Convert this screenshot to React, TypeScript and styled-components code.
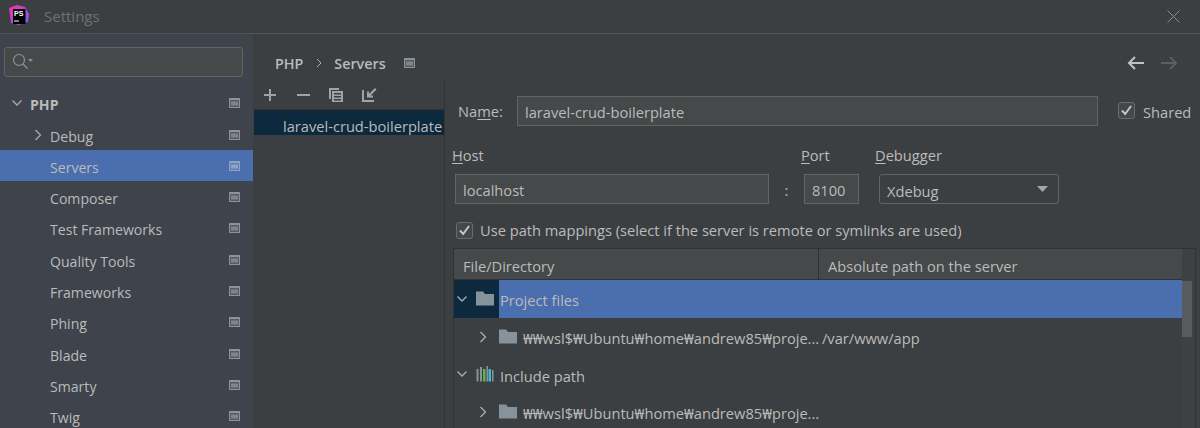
import { type ReactNode } from 'react';
import styled, { createGlobalStyle } from 'styled-components';

const GlobalStyle = createGlobalStyle`
  html, body {
    margin: 0;
    height: 428px;
    overflow: hidden;
    background: #3c3f41;
  }
  * {
    box-sizing: border-box;
  }
`;

const Page = styled.div`
  width: 1200px;
  height: 428px;
  overflow: hidden;
  display: flex;
  flex-direction: column;
  background: #3c3f41;
  color: #bbbbbb;
  font-family: 'Open Sans', 'Noto Sans', sans-serif;
  font-size: 14.65px;
  line-height: 20px;
`;

const TitleBar = styled.header`
  height: 34px;
  flex: none;
  display: flex;
  align-items: center;
  padding: 0 20px 1px 9px;
  border-bottom: 1px solid #515354;
`;

const LogoWrap = styled.span`
  display: flex;
  margin-top: -3px;
`;

const TitleText = styled.span`
  margin-left: 15px;
  color: #6e7173;
  font-size: 15px;
`;

const CloseButton = styled.svg`
  margin-left: auto;
`;

const Body = styled.div`
  flex: 1;
  display: flex;
  min-height: 0;
`;

const Sidebar = styled.nav`
  width: 253px;
  flex: none;
  background: #3e434c;
  padding-top: 13px;
  overflow: hidden;
  font-size: 14.1px;
`;

const SearchBox = styled.div`
  height: 30px;
  margin: 0 10px 0 4px;
  display: flex;
  align-items: center;
  padding-left: 7px;
  background: #45494a;
  border: 1px solid #646464;
  border-radius: 3px;
`;

const Tree = styled.ul`
  list-style: none;
  margin: 10.6px 0 0;
  padding: 0;
`;

const TreeRow = styled.li<{ $active?: boolean; $indent: number; $bold?: boolean }>`
  height: 31.3px;
  display: flex;
  align-items: center;
  padding-left: ${(p) => p.$indent}px;
  padding-right: 13px;
  background: ${(p) => (p.$active ? '#4b6eaf' : 'transparent')};
  font-weight: ${(p) => (p.$bold ? 700 : 400)};
`;

const TreeLabel = styled.span`
  flex: 1;
  padding-top: 4px;
`;

const Main = styled.main`
  flex: 1;
  min-width: 0;
  display: flex;
  flex-direction: column;
`;

const Breadcrumb = styled.div`
  height: 46px;
  flex: none;
  display: flex;
  align-items: center;
  padding: 12px 22px 0 22px;
  font-size: 14.3px;
  font-weight: 600;
`;

const CrumbText = styled.span`
  padding-top: 2px;
`;

const CrumbSeparator = styled.svg`
  margin: 0 12px 0 13px;
`;

const CrumbIcon = styled.span`
  display: flex;
  margin-left: 18px;
`;

const HistoryNav = styled.div`
  margin-left: auto;
  display: flex;
  gap: 15px;
`;

const Split = styled.div`
  flex: 1;
  display: flex;
  min-height: 0;
`;

const ServerList = styled.section`
  width: 192px;
  flex: none;
  padding-left: 1px;
  border-right: 1px solid #323232;
`;

const ListToolbar = styled.div`
  height: 30px;
  display: flex;
  align-items: center;
  gap: 17px;
  padding-left: 9px;
  border-bottom: 1px solid #323232;
  margin-left: -1px;
`;

const ServerItem = styled.div`
  height: 25px;
  display: flex;
  align-items: center;
  padding: 6px 0 0 29px;
  background: #0d293e;
  white-space: nowrap;
  overflow: hidden;
`;

const Form = styled.section`
  flex: 1;
  min-width: 0;
  padding: 16px 0 0 8px;
`;

const NameRow = styled.div`
  display: flex;
  align-items: center;
  height: 29px;
  padding-left: 5px;
`;

const Field = styled.div<{ $width?: number; $grow?: boolean }>`
  height: 30px;
  display: flex;
  align-items: center;
  padding: 2px 7px 0;
  background: #45494a;
  border: 1px solid #646464;
  width: ${(p) => (p.$width ? `${p.$width}px` : 'auto')};
  flex: ${(p) => (p.$grow ? 1 : 'none')};
`;

const NameLabel = styled.label`
  width: 59px;
  flex: none;
  padding-top: 1px;
`;

const Mnemonic = styled.span`
  text-decoration: underline;
  text-underline-offset: 2px;
`;

const CheckLabel = styled.label<{ $gap: number }>`
  display: flex;
  align-items: center;
  gap: ${(p) => p.$gap}px;
  white-space: nowrap;
`;

const CheckBox = styled.span`
  width: 17px;
  height: 17px;
  display: flex;
  align-items: center;
  justify-content: center;
  background: #43494a;
  border: 1px solid #6b6b6b;
  border-radius: 3px;
`;

const SharedWrap = styled.div`
  margin-left: 20px;
  width: 82px;
  flex: none;
`;

const HostGrid = styled.div`
  display: grid;
  grid-template-columns: 314px 35px 55px 1fr;
  grid-template-rows: 20px 30px;
  row-gap: 8px;
  margin-top: 21px;
  padding-left: 2px;
`;

const GridLabel = styled.label<{ $shift?: number }>`
  margin: -1px 0 0 ${(p) => p.$shift ?? 0}px;
  white-space: nowrap;
`;

const Colon = styled.span`
  text-align: center;
  line-height: 32px;
`;

const ComboBox = styled.div`
  width: 180px;
  height: 30px;
  margin-left: 20px;
  display: flex;
  align-items: center;
  justify-content: space-between;
  padding: 0 10px 0 7px;
  background: #3c3f41;
  border: 1px solid #646464;
  border-radius: 3px;
`;

const ComboValue = styled.span`
  padding-top: 4px;
`;

const MappingRow = styled.div`
  margin-top: 16px;
  padding-left: 3px;
`;

const Table = styled.div`
  margin: 8px 4px 0 0;
  border: 1px solid #323232;
  border-bottom: none;
  position: relative;
`;

const TableHead = styled.div`
  height: 31px;
  display: grid;
  grid-template-columns: 364px 1fr;
  align-items: center;
  background: #45494a;
  border-bottom: 1px solid #323232;
`;

const HeadCell = styled.div<{ $divider?: boolean }>`
  height: 100%;
  display: flex;
  align-items: center;
  padding: 4px 0 0 9px;
  border-left: ${(p) => (p.$divider ? '1px solid #323232' : 'none')};
`;

const Row = styled.div<{ $selected?: boolean; $indent: number }>`
  height: 37.7px;
  margin-right: 13px;
  display: flex;
  align-items: center;
  padding-left: ${(p) => p.$indent}px;
  white-space: nowrap;
  background: ${(p) =>
    p.$selected ? 'linear-gradient(90deg, #0d293e 45px, #4b6eaf 45px)' : 'transparent'};
`;

const RowIcon = styled.span`
  display: flex;
  width: 24px;
  flex: none;
`;

const RowChevron = styled.span<{ $width: number }>`
  display: flex;
  width: ${(p) => p.$width}px;
  flex: none;
`;

const RowText = styled.span`
  padding-top: 3px;
`;

const PathCell = styled(RowText)`
  width: 299px;
  flex: none;
  overflow: hidden;
`;

const ScrollTrack = styled.div`
  position: absolute;
  top: 0;
  bottom: 0;
  right: 0;
  width: 13px;
  background: #3e4143;
`;

const ScrollThumb = styled.div`
  margin-top: 32px;
  width: 10px;
  height: 56px;
  background: #585b5b;
`;

const LogoText = styled.text`
  font-family: 'Liberation Sans', sans-serif;
  font-size: 7px;
  font-weight: 700;
  fill: #ffffff;
`;

const Logo = () => (
  <svg width="20" height="20" viewBox="0 0 20 20">
    <defs>
      <linearGradient id="ps-edge" x1="0" y1="0" x2="1" y2="1">
        <stop offset="0" stopColor="#ff318c" />
        <stop offset="0.55" stopColor="#b345f1" />
        <stop offset="1" stopColor="#765af8" />
      </linearGradient>
    </defs>
    <path d="M0 3 L8 0 L16 2 L20 9 L19 17 L10 20 L2 18 Z" fill="url(#ps-edge)" />
    <rect x="4" y="4" width="12.5" height="15" fill="#000000" />
    <LogoText x="5" y="11">PS</LogoText>
    <rect x="5" y="15.5" width="5" height="1" fill="#ffffff" />
  </svg>
);

const ProjectIcon = ({ active }: { active?: boolean }) => (
  <svg width="11" height="10" viewBox="0 0 11 10">
    <rect width="11" height="10" rx="0.5" fill={active ? '#8ea3c6' : '#8c9499'} />
    <rect x="1" y="2" width="9" height="7" fill={active ? '#5f7db5' : '#565c62'} />
    <rect x="2" y="3.5" width="7" height="4" fill={active ? '#8ea3c6' : '#7d868b'} />
  </svg>
);

const Chevron = ({ open }: { open?: boolean }) => (
  <svg width="12" height="12" viewBox="0 0 12 12" fill="none" stroke="#a9adb0" strokeWidth="1.3">
    <path d={open ? 'M1.5 3.5 L6 8 L10.5 3.5' : 'M3.5 1 L8.5 6 L3.5 11'} />
  </svg>
);

const Folder = () => (
  <svg width="18" height="15" viewBox="0 0 18 15" fill="#87939a">
    <path d="M0 0.5 H7 L9 3 H18 V14.5 H0 Z" />
  </svg>
);

const LibraryIcon = () => (
  <svg width="18" height="16" viewBox="0 0 18 16">
    <rect x="0.5" y="3" width="2" height="12.5" fill="#87939a" />
    <rect x="4" y="1" width="2" height="14.5" fill="#87939a" />
    <rect x="7" y="3" width="2.5" height="12.5" fill="#62b543" />
    <rect x="10.5" y="0" width="1.5" height="15.5" fill="#87939a" />
    <rect x="12.5" y="3" width="2.5" height="12.5" fill="#40b6e0" />
    <rect x="16" y="4" width="1.5" height="11.5" fill="#87939a" />
  </svg>
);

const Check = () => (
  <svg width="13" height="13" viewBox="0 0 13 13" fill="none" stroke="#c4c6c8" strokeWidth="2">
    <path d="M2 6.5 L5.2 10 L11 2" />
  </svg>
);

const SearchIcon = () => (
  <svg width="22" height="18" viewBox="0 0 22 18" fill="none" stroke="#8c9296" strokeWidth="1.2">
    <circle cx="7" cy="7" r="5.5" />
    <path d="M11 11 L15.5 15.5" />
    <path d="M16 6 H21 L18.5 9 Z" fill="#8c9296" stroke="none" />
  </svg>
);

const ArrowIcon = ({ back }: { back?: boolean }) => (
  <svg width="18" height="14" viewBox="0 0 18 14" fill="none" stroke={back ? '#c0c3c5' : '#5c5f61'} strokeWidth="2">
    <path d={back ? 'M17 7 H2 M8 1 L2 7 L8 13' : 'M1 7 H16 M10 1 L16 7 L10 13'} />
  </svg>
);

const ToolIcon = ({ children }: { children: ReactNode }) => (
  <svg width="16" height="16" viewBox="0 0 16 16" fill="#a0a4a7">
    {children}
  </svg>
);

const menu: { label: string; active?: boolean; chevron?: boolean }[] = [
  { label: 'Debug', chevron: true },
  { label: 'Servers', active: true },
  { label: 'Composer' },
  { label: 'Test Frameworks' },
  { label: 'Quality Tools' },
  { label: 'Frameworks' },
  { label: 'Phing' },
  { label: 'Blade' },
  { label: 'Smarty' },
  { label: 'Twig' },
];

const wslPath = '₩₩wsl$₩Ubuntu₩home₩andrew85₩proje...';

export default function App() {
  return (
    <Page>
      <GlobalStyle />
      <TitleBar>
        <LogoWrap>
          <Logo />
        </LogoWrap>
        <TitleText>Settings</TitleText>
        <CloseButton width="13" height="13" viewBox="0 0 13 13" stroke="#8a8d8f" strokeWidth="1">
          <path d="M0.5 0.5 L12.5 12.5 M12.5 0.5 L0.5 12.5" />
        </CloseButton>
      </TitleBar>
      <Body>
        <Sidebar>
          <SearchBox>
            <SearchIcon />
          </SearchBox>
          <Tree>
            <TreeRow $indent={11} $bold>
              <RowChevron $width={19}>
                <Chevron open />
              </RowChevron>
              <TreeLabel>PHP</TreeLabel>
              <ProjectIcon />
            </TreeRow>
            {menu.map((item) => (
              <TreeRow key={item.label} $indent={item.chevron ? 32 : 50} $active={item.active}>
                {item.chevron && (
                  <RowChevron $width={18}>
                    <Chevron />
                  </RowChevron>
                )}
                <TreeLabel>{item.label}</TreeLabel>
                <ProjectIcon active={item.active} />
              </TreeRow>
            ))}
          </Tree>
        </Sidebar>
        <Main>
          <Breadcrumb>
            <CrumbText>PHP</CrumbText>
            <CrumbSeparator width="6" height="10" viewBox="0 0 6 10" fill="none" stroke="#a9adb0">
              <path d="M1 1 L5 5 L1 9" />
            </CrumbSeparator>
            <CrumbText>Servers</CrumbText>
            <CrumbIcon>
              <ProjectIcon />
            </CrumbIcon>
            <HistoryNav>
              <ArrowIcon back />
              <ArrowIcon />
            </HistoryNav>
          </Breadcrumb>
          <Split>
            <ServerList>
              <ListToolbar>
                <ToolIcon>
                  <path d="M7 2 H9 V7 H14 V9 H9 V14 H7 V9 H2 V7 H7 Z" />
                </ToolIcon>
                <ToolIcon>
                  <rect x="2" y="7" width="13" height="2" />
                </ToolIcon>
                <ToolIcon>
                  <path d="M1 1 H11 V3 H3 V12 H1 Z" />
                  <path fillRule="evenodd" d="M4 4 H15 V15 H4 Z M6 6 V7.5 H13 V6 Z M6 9 V10.5 H13 V9 Z M6 12 V13.5 H13 V12 Z" />
                </ToolIcon>
                <ToolIcon>
                  <path d="M1 3 H3 V13 H13 V15 H1 Z" />
                  <path d="M14 1 L15.5 2.5 L9.5 8.5 H12 V10.5 H6 V4.5 H8 V7 Z" />
                </ToolIcon>
              </ListToolbar>
              <ServerItem>laravel-crud-boilerplate</ServerItem>
            </ServerList>
            <Form>
              <NameRow>
                <NameLabel>
                  Na<Mnemonic>m</Mnemonic>e:
                </NameLabel>
                <Field $grow>laravel-crud-boilerplate</Field>
                <SharedWrap>
                  <CheckLabel $gap={8}>
                    <CheckBox>
                      <Check />
                    </CheckBox>
                    <RowText>Shared</RowText>
                  </CheckLabel>
                </SharedWrap>
              </NameRow>
              <HostGrid>
                <GridLabel $shift={-3}>
                  <Mnemonic>H</Mnemonic>ost
                </GridLabel>
                <span />
                <GridLabel $shift={-3}>
                  <Mnemonic>P</Mnemonic>ort
                </GridLabel>
                <GridLabel $shift={16}>
                  <Mnemonic>D</Mnemonic>ebugger
                </GridLabel>
                <Field $width={314}>localhost</Field>
                <Colon>:</Colon>
                <Field $width={55}>8100</Field>
                <ComboBox>
                  <ComboValue>Xdebug</ComboValue>
                  <svg width="11" height="6" viewBox="0 0 11 6" fill="#a4a7a9">
                    <path d="M0 0 H11 L5.5 6 Z" />
                  </svg>
                </ComboBox>
              </HostGrid>
              <MappingRow>
                <CheckLabel $gap={7}>
                  <CheckBox>
                    <Check />
                  </CheckBox>
                  Use path mappings (select if the server is remote or symlinks are used)
                </CheckLabel>
              </MappingRow>
              <Table>
                <TableHead>
                  <HeadCell>File/Directory</HeadCell>
                  <HeadCell $divider>Absolute path on the server</HeadCell>
                </TableHead>
                <Row $selected $indent={2}>
                  <RowChevron $width={20}>
                    <Chevron open />
                  </RowChevron>
                  <RowIcon>
                    <Folder />
                  </RowIcon>
                  <RowText>Project files</RowText>
                </Row>
                <Row $indent={23}>
                  <RowChevron $width={22}>
                    <Chevron />
                  </RowChevron>
                  <RowIcon>
                    <Folder />
                  </RowIcon>
                  <PathCell>{wslPath}</PathCell>
                  <RowText>/var/www/app</RowText>
                </Row>
                <Row $indent={2}>
                  <RowChevron $width={20}>
                    <Chevron open />
                  </RowChevron>
                  <RowIcon>
                    <LibraryIcon />
                  </RowIcon>
                  <RowText>Include path</RowText>
                </Row>
                <Row $indent={23}>
                  <RowChevron $width={22}>
                    <Chevron />
                  </RowChevron>
                  <RowIcon>
                    <Folder />
                  </RowIcon>
                  <PathCell>{wslPath}</PathCell>
                </Row>
                <ScrollTrack>
                  <ScrollThumb />
                </ScrollTrack>
              </Table>
            </Form>
          </Split>
        </Main>
      </Body>
    </Page>
  );
}
